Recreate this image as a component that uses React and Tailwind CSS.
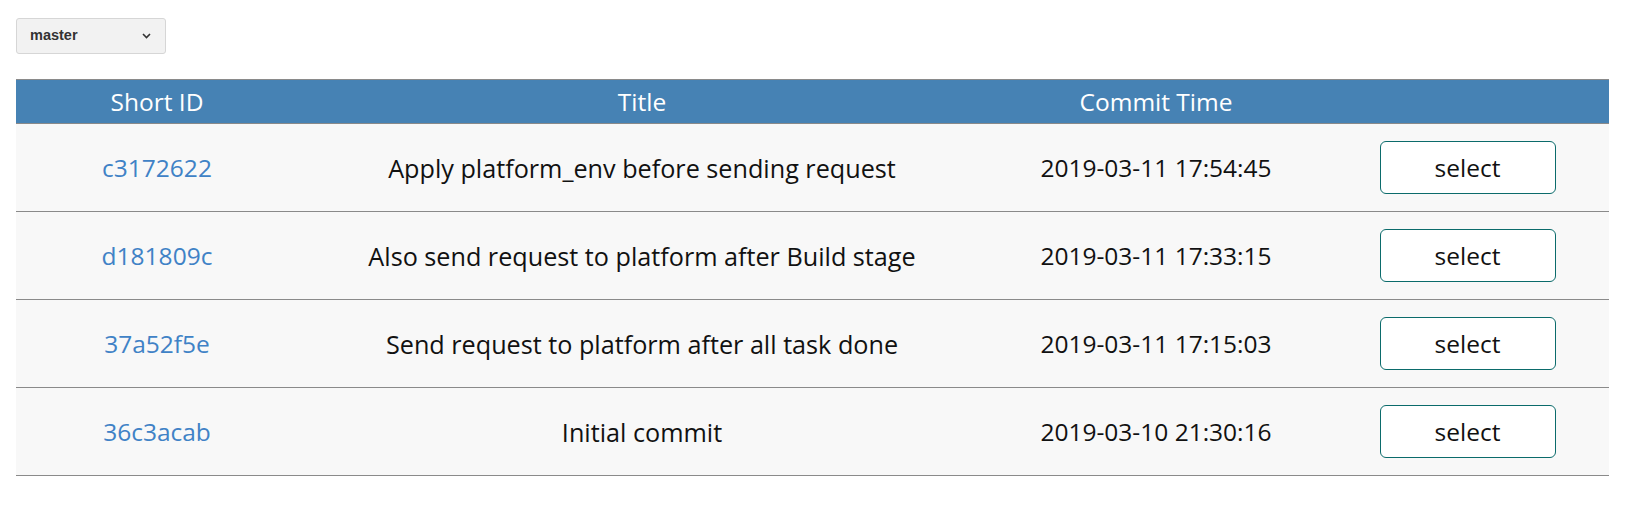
import React from "react";

const rows = [
  { id: "c3172622", title: "Apply platform_env before sending request", time: "2019-03-11 17:54:45" },
  { id: "d181809c", title: "Also send request to platform after Build stage", time: "2019-03-11 17:33:15" },
  { id: "37a52f5e", title: "Send request to platform after all task done", time: "2019-03-11 17:15:03" },
  { id: "36c3acab", title: "Initial commit", time: "2019-03-10 21:30:16" },
];

export default function App() {
  return (
    <div className="min-h-[509px] bg-white pt-[18px] pl-[16px] pr-[30px]" style={{ fontFamily: '"Open Sans", sans-serif' }}>
      <div className="flex h-[36px] w-[150px] items-center justify-between rounded-[3px] border border-[#d6d6d6] bg-[#f2f2f2] pl-[13px] pr-[14px]">
        <span className="text-[14.5px] font-bold text-[#333]" style={{ fontFamily: '"Liberation Sans", Arial, sans-serif' }}>master</span>
        <svg width="9" height="6" viewBox="0 0 9 6" fill="none">
          <path d="M1 1l3.5 3.5L8 1" stroke="#333" strokeWidth="1.6" />
        </svg>
      </div>
      <div className="mt-[25px] w-[1593px]">
        <div className="grid h-[45px] grid-cols-[282px_688px_340px_283px] items-center border-t border-b border-[#8a8a8a] bg-[#4682b4] pt-[2px] text-center text-[24.5px] text-white">
          <div>Short ID</div>
          <div>Title</div>
          <div>Commit Time</div>
          <div></div>
        </div>
        {rows.map((r) => (
          <div key={r.id} className="grid h-[88px] grid-cols-[282px_688px_340px_283px] items-center border-b border-[#8a8a8a] bg-[#f8f8f8] text-center text-[24.5px] text-[#111]">
            <div className="pt-[2px] text-[#3f82c6]">{r.id}</div>
            <div className="pt-[2px] text-[25.2px]">{r.title}</div>
            <div className="pt-[2px]">{r.time}</div>
            <div className="flex justify-center">
              <button className="h-[53px] w-[176px] rounded-[6px] border border-[#0b6b6b] bg-white pt-[2px] text-[24.5px] text-[#111]">select</button>
            </div>
          </div>
        ))}
      </div>
    </div>
  );
}
